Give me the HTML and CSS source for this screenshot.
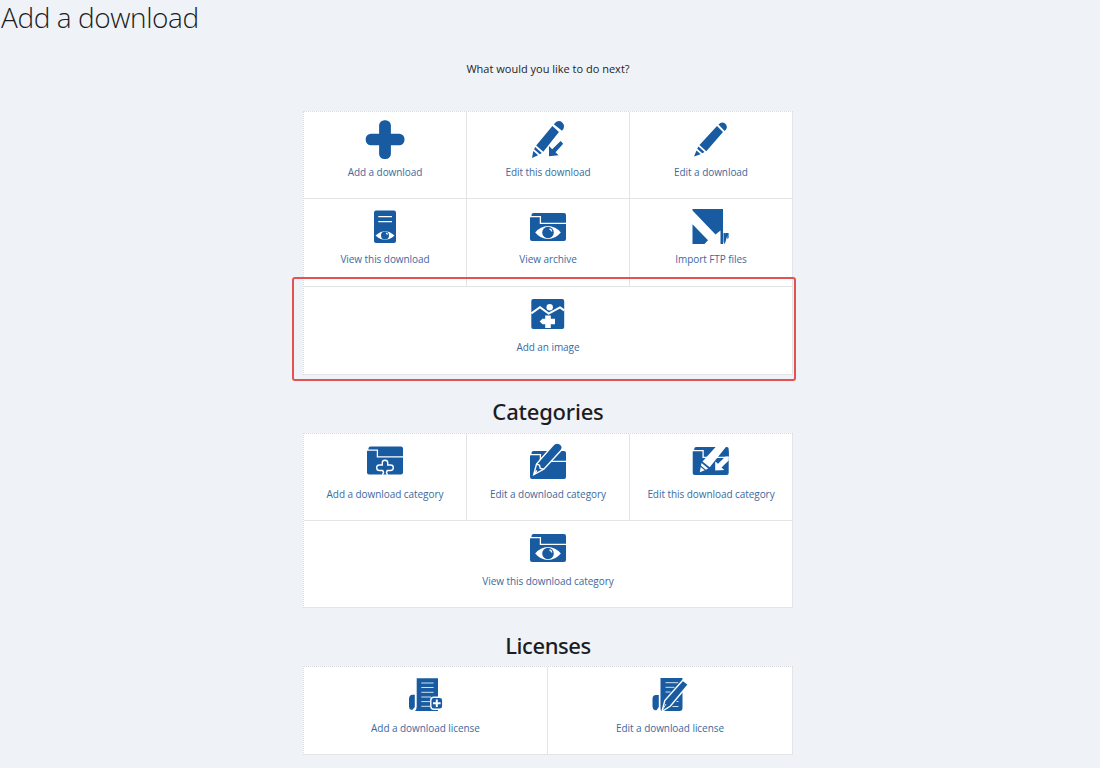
FILE: index.html
```html
<!DOCTYPE html>
<html lang="en">
<head>
<meta charset="utf-8">
<title>Add a download</title>
<link rel="stylesheet" href="styles.css">
</head>
<body>
<svg class="defs" width="0" height="0" aria-hidden="true">
  <defs>
    <g id="folder">
      <rect class="ink" x="0" y="3" width="36" height="25" rx="2"/>
      <path class="ink" d="M1.5 3V2q0-2 2-2H34q2 0 2 2v8H1.5z"/>
      <path class="cut" d="M0 3.6H10.4V10.4H36"/>
    </g>
    <g id="folder-eye">
      <use href="#folder"/>
      <path class="paper" d="M5.2 19.500Q10.500 13 18 13T30.800 19.500Q25.500 26 18 26T5.200 19.500z"/>
      <circle class="ink" cx="18" cy="19.500" r="5.800"/>
      <path class="cut" d="M19.500 16q2 .3 2.300 2.500"/>
    </g>
  </defs>
</svg>

<h1 class="page-title">Add a download</h1>
<main class="content">
  <p class="question">What would you like to do next?</p>

  <nav class="grid grid-actions">
    <a class="cell"><svg class="icon" viewBox="363 117 44 44"><rect class="ink" x="379.1" y="120.2" width="11.800" height="38.800" rx="5.300"/><rect class="ink" x="365.700" y="133.700" width="38.800" height="11.600" rx="5.300"/></svg><span class="label">Add a download</span></a>
    <a class="cell"><svg class="icon" viewBox="526 117 44 44"><path class="ink" d="M553.800 124.200Q558 118.800 562.300 122.400Q565.800 126.400 562 130.800zM552.400 126L558.900 132.100L543.300 151.700L536.200 145.500z"/><path class="ink" d="M535.200 147L541.800 152.900L539.800 154.300L534.100 149.300zM533.300 151L538.100 155.200L532 158z"/><path class="ink" d="M549 156.200V146L552.200 149.200L560.600 141L563.200 143.800L555.500 152.300L558.500 155.300z"/></svg><span class="label">Edit this download</span></a>
    <a class="cell"><svg class="icon" viewBox="689 117 44 44"><path class="ink" d="M718.500 124.600Q721.700 120.700 725.400 123.700Q728.800 127.700 724.600 131zM717 126L723 132L706.300 151.200L699.500 145z"/><path class="ink" d="M698.500 146.500L704.500 152L702.300 153.300L697.200 148.800zM696.500 150.500L700.700 154.200L694 156.500z"/></svg><span class="label">Edit a download</span></a>
    <a class="cell"><svg class="icon" viewBox="363 204 44 44"><rect class="ink" x="374" y="210.400" width="22" height="32.600" rx="2"/><path class="cut" d="M378.300 216.700H392M378.300 221.700H392"/><path class="paper" d="M375.500 235.500Q385 226.800 394.500 235.500Q385 244.200 375.500 235.500z"/><circle class="ink" cx="385" cy="235.500" r="4"/><path class="cut" d="M386 233.200q1.300.3 1.500 1.400"/></svg><span class="label">View this download</span></a>
    <a class="cell"><svg class="icon" viewBox="526 204 44 44"><use href="#folder-eye" x="530" y="213"/></svg><span class="label">View archive</span></a>
    <a class="cell"><svg class="icon" viewBox="689 204 44 44"><path class="ink" d="M692.500 209H723V244H720.500V230.500L715.500 234.600L692.500 210.500zM692.500 224.200L708 240.200L704.500 244H692.500zM723.500 233H725.300V238L723.500 243zM725.600 233H728.600V238L727.300 239V235.500L725 243.500H723.800z"/></svg><span class="label">Import FTP files</span></a>
    <a class="cell cell-wide highlighted"><svg class="icon" viewBox="526 292 44 44"><rect class="ink" x="531.300" y="299" width="32.900" height="30" rx="2"/><path class="ridge" d="M531.300 313.400L540 307.200L548.700 313.600L560 307.400L564.200 310.400"/><circle class="paper" cx="549.700" cy="307.300" r="3.200"/><path class="paper" d="M545.200 315.600H550.800V318.800H555V324.300H550.800V328H545.200V324.300H542.500L539.600 321.600L542.500 318.800H545.200z"/></svg><span class="label">Add an image</span></a>
  </nav>

  <h2 class="section-title title-categories">Categories</h2>
  <nav class="grid grid-categories">
    <a class="cell"><svg class="icon" viewBox="363 439 44 44"><use href="#folder" x="367" y="446.500"/><path class="outline" d="M382.300 474.800Q384.500 473 382.700 470.500H379.500Q376.700 470.500 376.700 467.700T379.500 465H382.300V462.500Q382.300 460.300 385 460.300T387.700 462.500V465H390.500Q393.300 465 393.300 467.700T390.500 470.500H387.300Q385.500 473 387.700 474.800"/></svg><span class="label">Add a download category</span></a>
    <a class="cell"><svg class="icon" viewBox="526 439 44 44"><use href="#folder" x="530" y="451"/><path class="pencil" d="M533.700 474.700L536.500 464L552.700 445.500Q556 441.500 560 444T561 450.500L543.800 469.300z"/><path class="outline" d="M536.500 464L539.500 465.200L540.300 468.500L543.800 469.300M534 474.500L536.800 470.500"/></svg><span class="label">Edit a download category</span></a>
    <a class="cell"><svg class="icon" viewBox="689 439 44 44"><use href="#folder" x="692.700" y="447"/><path class="paper" d="M716.500 446H726.700L709.700 467.300L702.500 461.500zM701.600 463L708.200 468.500L705.800 469.700L700.900 465.600zM700.700 467L704.700 470.300L699.800 472.300z"/><path class="paper" d="M715.200 470.500V461.500L718 463.700L725.500 456.500H728.700V460.500L721.500 467.500L724.300 470z"/></svg><span class="label">Edit this download category</span></a>
    <a class="cell cell-wide"><svg class="icon" viewBox="526 526 44 44"><use href="#folder-eye" x="530" y="534"/></svg><span class="label">View this download category</span></a>
  </nav>

  <h2 class="section-title title-licenses">Licenses</h2>
  <nav class="grid grid-licenses">
    <a class="cell"><svg class="icon" viewBox="404 673 44 44"><path class="ink" d="M416.700 678.300H438V711H414.500Q416.700 710 416.700 707zM414.800 694.800V707L412.500 709.800H411Q409 709 409 706.500V699Q409 695 412.500 694.800z"/><path class="lines" d="M421.300 683H433.600M421.300 687.500H433.600M421.300 692.300H433.600M421.300 697H431M421.300 701.600H430M421.300 706.300H430"/><rect class="pencil" x="430.800" y="697.300" width="12" height="12" rx="3"/><path class="plus" d="M436.800 699.500V707M433 703.300H440.600"/></svg><span class="label">Add a download license</span></a>
    <a class="cell"><svg class="icon" viewBox="647.500 673 44 44"><path class="ink" d="M660 678H682V708Q682 711 679 711H661Q660 711 660 707zM658.300 695V707L656 710.300H654.500Q652 709.500 652 706.500V699Q652 695.200 655.500 695z"/><path class="lines" d="M665 682.700H677.700M665 687.300H674M665 692H670M676 701.500H678M672 706.500H678"/><path class="pencil" d="M661.700 710.500L664.300 700.500L682.300 680.300L687.800 684.500L670 706L662 711z"/><path class="lines" d="M662.500 709L665.500 704"/></svg><span class="label">Edit a download license</span></a>
  </nav>
</main>
</body>
</html>
```
FILE: styles.css
```css
*, *::after { box-sizing: border-box; }
body {
  margin: 0;
  height: 768px;
  overflow: hidden;
  background: #eff3f8;
  color: #1d1d1f;
  font-family: "Open Sans", "Noto Sans", sans-serif;
}
.defs { display: block; height: 0; }
.page-title {
  margin: 0;
  padding-left: 1px;
  height: 59px;
  font-size: 28px;
  font-weight: 300;
  line-height: 34px;
  letter-spacing: -0.42px;
}
.content {
  display: flex;
  flex-direction: column;
  width: 490px;
  margin-left: 303px;
}
.question {
  margin: 0;
  height: 52px;
  font-size: 11px;
  line-height: 19px;
  text-align: center;
}
.grid {
  display: grid;
  background: #fff;
  border-top: 1px dotted #d9dce0;
  border-left: 1px dotted #d9dce0;
}
.grid-actions { grid-template: 87px 88px 88px / repeat(3, 163px); }
.grid-categories { grid-template: 87px 87px / repeat(3, 163px); }
.grid-licenses { grid-template: 88px / 244px 245px; }
.cell {
  display: flex;
  flex-direction: column;
  align-items: center;
  padding-top: 5px;
  border-right: 1px solid #e3e4e6;
  border-bottom: 1px solid #e3e4e6;
  color: #3c699f;
}
.cell-wide { grid-column: 1 / -1; }
.grid-licenses .cell { padding-top: 6px; }
.highlighted { position: relative; }
.highlighted::after {
  content: "";
  position: absolute;
  left: -12px;
  top: -10px;
  width: 504px;
  height: 104px;
  border: 2px solid #e25252;
  border-radius: 3px;
}
.icon { display: block; width: 44px; height: 44px; }
.label {
  font-size: 10px;
  line-height: 14px;
  margin-top: 4px;
  white-space: nowrap;
  letter-spacing: -0.06px;
}
.section-title {
  margin: 0;
  font-family: "Noto Sans", "Open Sans", sans-serif;
  font-size: 22px;
  font-weight: 500;
  text-align: center;
}
.title-categories { height: 58px; line-height: 73px; letter-spacing: -0.2px; }
.title-licenses { height: 58px; line-height: 74px; letter-spacing: -0.4px; }
.ink { fill: #185ba1; }
.paper { fill: #fff; }
.cut { fill: none; stroke: #fff; stroke-width: 1.3; }
.ridge { fill: none; stroke: #fff; stroke-width: 2; }
.outline { fill: none; stroke: #fff; stroke-width: 1.4; }
.pencil { fill: #185ba1; stroke: #fff; stroke-width: 1.4; }
.lines { fill: none; stroke: #d3e0ed; stroke-width: 1; }
.plus { fill: none; stroke: #fff; stroke-width: 2; }
```
